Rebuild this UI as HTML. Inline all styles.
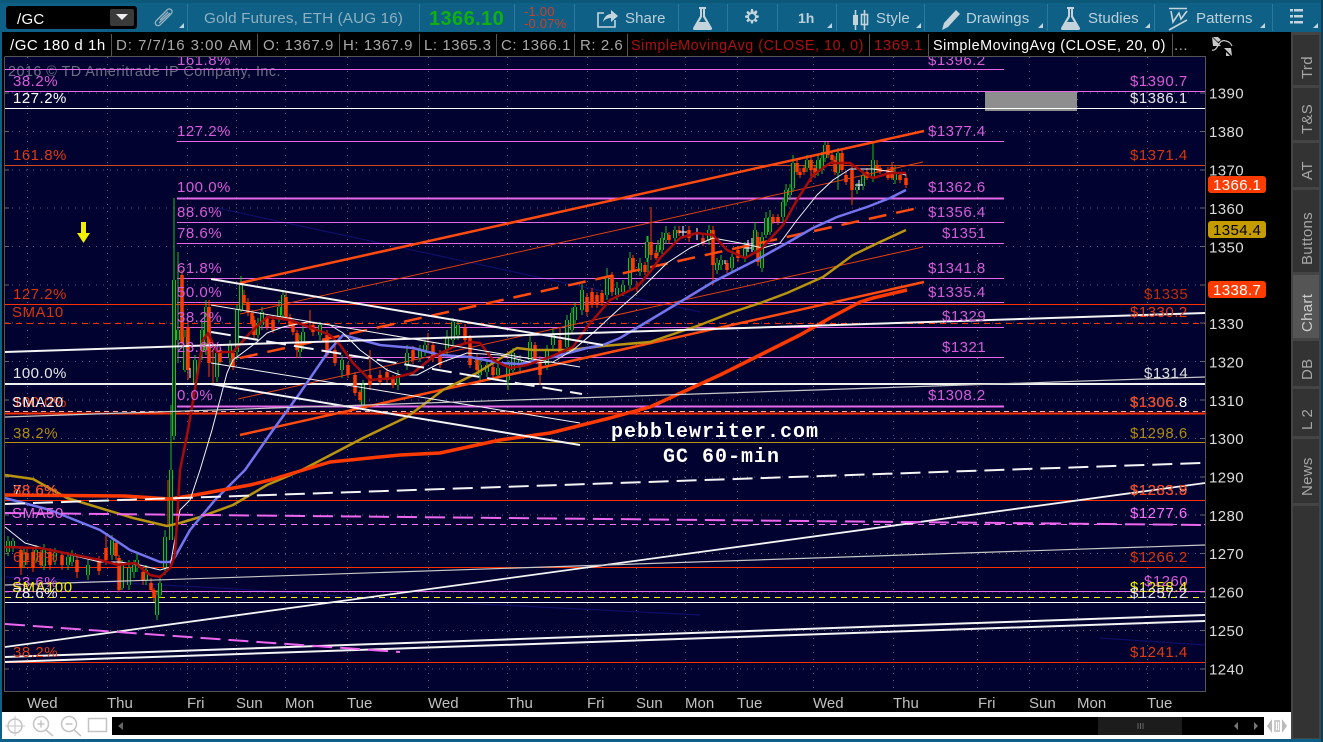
<!DOCTYPE html>
<html><head><meta charset="utf-8"><title>/GC chart</title>
<style>
html,body{margin:0;padding:0;background:#000;width:1323px;height:742px;overflow:hidden}
svg{display:block;position:absolute;left:0;top:0}
text{font-family:"Liberation Sans",sans-serif;font-size:15px;letter-spacing:.5px;white-space:pre}
.m text{fill:#d85cd8}
.t text{fill:#a8a8a8;letter-spacing:.55px}
.ax text{fill:#dcdcdc;letter-spacing:.4px}
.d text{fill:#c0c0c0;letter-spacing:0}
.tb text{fill:#bcd0da;letter-spacing:.1px}
.tab text{fill:#a6a6a6;letter-spacing:.3px}
.ic{fill:none;stroke:#c4d4dc;stroke-width:1.6}
</style></head><body>
<svg width="1323" height="742" viewBox="0 0 1323 742" xmlns="http://www.w3.org/2000/svg">
<rect width="1323" height="742" fill="#000"/>
<!-- chart bg -->
<rect x="4.5" y="56.5" width="1201" height="635" fill="#020230" stroke="#555" stroke-width="1"/>
<!-- grid -->
<g stroke="#5c5c7c" stroke-width="1" stroke-dasharray="1 6" fill="none">
<path d="M5 93H1205M5 131.5H1205M5 170H1205M5 208H1205M5 246.500H1205M5 285H1205M5 323H1205M5 361.500H1205M5 400H1205M5 438.500H1205M5 477H1205M5 515H1205M5 553.500H1205M5 592H1205M5 630.500H1205M5 669H1205"/>
<path d="M27.500 57V691M107.500 57V691M187.500 57V691M236.500 57V691M285.500 57V691M347.500 57V691M428.500 57V691M507.500 57V691M587.500 57V691M636.500 57V691M685.500 57V691M737.500 57V691M813.500 57V691M893.500 57V691M977.500 57V691M1029.500 57V691M1077.500 57V691M1147.500 57V691"/>
</g>
<path d="M5 93h4M5 131.500h4M5 170h4M5 208h4M5 246.500h4M5 285h4M5 323h4M5 361.500h4M5 400h4M5 438.500h4M5 477h4M5 515h4M5 553.500h4M5 592h4M5 630.500h4M5 669h4M1200 93h5M1200 131.500h5M1200 170h5M1200 208h5M1200 246.500h5M1200 285h5M1200 323h5M1200 361.500h5M1200 400h5M1200 438.500h5M1200 477h5M1200 515h5M1200 553.500h5M1200 592h5M1200 630.500h5M1200 669h5" stroke="#666" fill="none"/>
<!-- gray box -->
<rect x="985" y="91" width="92" height="20" fill="#8e8e8e"/>
<!-- watermark -->
<text x="8" y="76" fill="#6e6e82" textLength="273" lengthAdjust="spacingAndGlyphs">2016 © TD Ameritrade IP Company, Inc.</text>
<!-- faint navy lines -->
<path d="M217 208L700 312M5 577L220 588L400 600L700 615M1100 638L1205 645" stroke="#0e0e68" stroke-width="1.2" fill="none"/>
<!-- horizontal lines -->
<g fill="none" stroke-width="1">
<path d="M5 69.500H1004M5 91.500H1205M177 141.500H1004M177 222.500H1004M177 243.500H1004M177 278.500H1004M177 302.500H1004M177 327.500H1004M177 357.500H1004M5 591.500H1205" stroke="#e468e8"/>
<path d="M177 198.500H1004M177 406.500H1004" stroke="#e468e8" stroke-width="2"/>
<path d="M5 108.500H1205M5 602.500H1205" stroke="#fff"/>
<path d="M5 165.500H1205" stroke="#d04820"/>
<path d="M5 304.500H1205M5 500.500H1205M5 567.500H1205M5 662.500H1205" stroke="#ff3000"/>
<path d="M5 323.500H1205" stroke="#ff3000" stroke-dasharray="6 5"/>
<path d="M5 384H1205" stroke="#f0f0f0" stroke-width="2"/>
<path d="M5 413.500H1205" stroke="#ff3000" stroke-width="2"/>
<path d="M5 411.500H1205" stroke="#ffb0a0" stroke-dasharray="5 4"/>
<path d="M5 442.500H1205" stroke="#b89010"/>
<path d="M5 524.500H1205" stroke="#ff70ff" stroke-dasharray="6 5"/>
<path d="M5 597.500H1205" stroke="#f0f000" stroke-dasharray="6 5"/>
</g>
<!-- candles -->
<path fill="none" stroke="#18c018" stroke-width="1" d="M174 198V440M178 252V363M171 405V540M165 530V575M8 536V556M13 538V552M24 548V568M36 545V563M44 544V570M55 548V565M68 552V570M72 550V566M88 560V580M112 535V560M122 560V590M129 560V590M134 560V578M137 552V572M146 565V585M157 590V620M160 578V598M185 330V372M195 355V390M202 322V360M206 300V355M217 345V382M230 340V365M237 305V360M241 276V312M258 318V338M262 307V330M279 300V322M283 290V318M300 335V358M303 326V350M320 322V340M342 355V378M363 380V410M398 370V390M407 345V370M420 345V362M425 340V356M447 330V355M453 318V345M458 320V340M480 360V380M487 360V377M498 363V380M508 360V390M513 348V374M520 355V371M530 336V365M547 345V370M553 328V350M567 315V352M572 308V334M575 302V324M582 284V315M607 268V300M617 282V300M623 280V296M630 252V290M640 258V276M648 236V274M647 236V262M658 240V256M662 232V254M666 226V244M675 226V242M709 225V245M717 258V274M721 255V270M732 252V272M745 242V262M755 222V252M762 232V272M766 212V238M770 210V235M783 198V222M786 184V206M790 184V200M793 155V192M807 155V172M818 154V176M822 152V174M825 142V162M838 148V190M857 183V194M863 170V190M873 143V182M895 166V184"/>
<g fill="none" stroke="#18c018" stroke-width="4"><path id="gb" d="M174 280V436M178 330V340M171 470V540M165 537V567M8 541V552M13 541V548M24 553V565M36 550V560M44 548V566M55 553V560M68 557V565M72 555V562M88 565V575M112 540V555M122 565V588M129 568V585M134 565V572M137 560V568M146 570V580M157 595V615M160 583V595M185 337V370M195 360V383M202 330V352M206 307V350M217 353V377M230 345V358M237 310V352M241 285V310M258 323V335M262 312V325M279 307V317M283 295V315M300 340V352M303 332V345M320 325V335M342 360V370M363 385V405M398 375V385M407 353V365M420 350V358M425 345V352M447 338V350M453 322V340M458 325V335M480 365V375M487 365V372M498 368V375M508 365V380M513 353V370M520 360V367M530 342V360M547 350V365M553 335V345M567 320V347M572 313V330M575 307V320M582 290V310M607 277V295M617 288V295M623 285V292M630 258V285M640 263V272M647 242V258M658 245V252M662 238V250M666 233V240M675 230V238M709 230V240M717 263V270M721 260V265M732 257V268M745 247V258M755 230V250M762 237V268M766 218V235M770 217V232M783 202V217M786 190V202M790 188V195M793 163V188M807 160V168M818 160V172M822 158V170M825 145V158M838 153V173M857 187V190M863 175V186M873 160V178M895 172V180"/></g>
<use href="#gb" fill="none" stroke="#020230" stroke-width="1.6"/>
<path fill="none" stroke="#ff3a00" stroke-width="1" d="M21 546V575M27 548V565M33 548V572M41 550V568M50 548V570M62 552V570M77 556V578M99 556V575M106 535V565M116 540V560M119 555V592M143 568V585M151 578V592M154 588V602M168 480V527M182 270V345M188 320V380M209 300V377M213 350V383M220 345V365M233 350V370M244 290V305M248 298V316M252 310V326M254 316V338M267 314V330M273 316V333M286 292V320M290 314V328M293 320V335M297 330V358M310 310V330M313 322V336M327 330V358M335 346V366M348 362V378M355 372V396M360 390V402M370 350V390M380 370V385M387 368V383M393 375V388M413 346V364M428 333V350M433 342V362M440 350V368M465 324V344M470 335V368M477 354V372M493 363V378M535 342V362M540 356V385M560 327V358M587 293V316M592 288V308M597 292V308M602 290V306M612 272V296M633 255V272M637 282V292M645 262V275M651 207V260M656 250V260M669 232V244M679 226V236M689 226V242M703 234V246M713 226V285M727 260V273M738 246V262M758 232V266M773 214V224M778 214V225M797 158V175M800 168V178M804 165V175M811 156V182M815 165V178M828 142V158M832 152V163M835 156V175M842 150V172M846 172V185M852 166V205M867 168V180M877 160V172M880 165V174M888 167V180M892 162V180M900 172V183M906 174V188"/>
<path fill="none" stroke="#ff3a00" stroke-width="3.5" d="M21 550V568M27 553V560M33 552V568M41 553V565M50 552V565M62 555V565M77 560V572M99 560V571M106 548V560M116 543V556M119 558V590M143 572V580M151 583V590M154 590V598M182 275V343M188 327V370M209 307V363M220 350V362M233 353V367M244 295V303M248 302V313M252 313V323M254 320V335M267 317V327M273 320V330M286 297V317M290 317V325M293 323V332M297 333V350M313 325V332M327 335V355M335 350V363M348 365V375M355 375V393M360 392V400M370 375V385M380 375V382M387 372V380M393 378V385M413 350V360M433 345V358M440 353V365M465 328V340M470 338V365M477 358V370M493 367V375M535 345V360M540 360V375M560 340V355M587 297V312M592 292V305M597 295V305M602 293V303M612 275V292M633 258V270M645 265V272M651 242V255M656 253V258M669 235V240M679 230V233M689 230V238M703 238V243M713 230V265M727 263V270M738 250V258M758 237V262M773 217V222M778 217V222M797 163V172M800 172V175M804 168V172M811 160V170M815 168V175M828 145V155M832 155V160M835 160V172M842 153V170M846 175V182M852 170V190M867 172V178M877 165V170M880 168V172M888 170V178M892 167V178M900 175V180M906 178V185"/>
<path fill="none" stroke="#fff" stroke-width="1" d="M190 368V378M683 226V238M697 228V240M725 260V264M748 240V252M752 238V252M859 180V190M855 185h8M679 232h8M744 248h8"/>
<!-- trend lines under MAs -->
<g fill="none" stroke-linecap="butt">
<path d="M240 283L924 131" stroke="#ff4a10" stroke-width="2.500"/>
<path d="M240 314L923 162M238 399L923 247" stroke="#e04010" stroke-width="1"/>
<path d="M240 358L918 208" stroke="#ff4a10" stroke-width="2.500" stroke-dasharray="18 10"/>
<path d="M240 435L924 282" stroke="#ff4a10" stroke-width="2.500"/>
</g>
<!-- MAs -->
<g fill="none" stroke-linejoin="round">
<path stroke="#b89410" stroke-width="2.500" d="M5 475L33 479L67 498L100 508L133 518L167 526L180 523L200 517L233 505L267 485L300 471L363 438L407 417L443 390L477 373L517 348L533 350L570 350L603 346L650 342L700 325L733 312L763 302L787 293L823 277L853 255L880 242L906 230"/>
<path stroke="#7474ee" stroke-width="2.500" d="M5 498L50 510L100 530L130 550L160 562L170 562L175 557L190 530L215 500L245 470L273 430L300 393L328 352L343 335L380 345L413 348L440 355L470 357L500 363L520 364L553 357L587 348L603 345L620 338L650 320L680 302L713 282L760 258L787 243L813 228L837 217L867 207L890 198L906 190"/>
<path stroke="#ff3a00" stroke-width="3.500" d="M5 495L125 496L170 499L195 495L250 485L270 480L330 462L400 455L440 453L500 440L550 433L610 418L650 407L720 375L800 335L830 318L860 302L873 298L907 290"/>
<path stroke="#f4f4f4" stroke-width="1" d="M5 527L25 543L50 550L100 562L120 562L140 565L160 570L170 567L180 510L190 500L200 470L212 430L227 373L233 360L257 342L267 333L283 327L307 322L330 325L343 333L360 350L387 370L400 375L417 375L440 363L467 353L500 355L533 363L553 362L573 350L593 333L620 308L637 293L667 263L690 248L713 238L740 243L763 248L780 243L797 220L817 195L833 180L850 169L873 169L893 172L906 175"/>
<path stroke="#a80a0a" stroke-width="2.500" d="M5 547L40 548L60 552L100 560L118 565L135 563L150 575L160 577L170 568L175 555L180 470L188 430L197 377L203 340L208 333L217 352L233 352L250 333L267 317L290 320L317 330L330 335L340 345L353 363L370 380L393 378L413 373L433 357L453 347L470 342L480 343L493 360L510 368L527 365L550 357L573 347L587 327L610 300L637 287L650 272L660 258L680 238L697 233L713 235L727 250L745 258L760 250L783 225L797 200L813 175L830 163L850 163L867 175L873 178L890 173L906 173"/>
</g>
<!-- white trend lines -->
<g fill="none" stroke="#f4f4f4">
<path d="M211 279L603 345" stroke-width="2"/>
<path d="M211 305L580 367M211 363L580 423" stroke-width="1"/>
<path d="M211 332L582 394" stroke-width="2" stroke-dasharray="20 8"/>
<path d="M211 384L580 445" stroke-width="2"/>
<path d="M5 352L1205 313" stroke-width="2"/>
<path d="M5 417L1205 377" stroke-width="1.200" stroke="#c8c8c8"/>
<path d="M5 504L1202 463" stroke-width="2" stroke-dasharray="20 8"/>
<path d="M5 647L1205 483" stroke-width="1.800"/>
<path d="M5 585L1205 545" stroke-width="1.200" stroke="#c8c8c8"/>
<path d="M5 657L1205 615M5 662L1205 621" stroke-width="2"/>
<path d="M5 624L400 652" stroke="#ee66ee" stroke-width="2" stroke-dasharray="20 8"/>
<path d="M5 513L1205 525" stroke="#ee66ee" stroke-width="2" stroke-dasharray="20 8"/>
</g>
<!-- arrow -->
<path d="M81 222H86V233H90L83.500 243L77 233H81Z" fill="#f0f000"/>
<!-- labels -->
<g class="m">
<text x="177" y="65">161.8%</text><text x="177" y="136">127.2%</text><text x="177" y="192">100.0%</text><text x="177" y="217">88.6%</text><text x="177" y="238">78.6%</text><text x="177" y="273">61.8%</text><text x="177" y="297">50.0%</text><text x="177" y="322">38.2%</text><text x="177" y="352">23.6%</text><text x="177" y="400">0.0%</text>
<text x="928" y="65">$1396.2</text><text x="928" y="136">$1377.4</text><text x="928" y="192">$1362.6</text><text x="928" y="217">$1356.4</text><text x="942" y="238">$1351</text><text x="928" y="273">$1341.8</text><text x="928" y="297">$1335.4</text><text x="942" y="321">$1329</text><text x="942" y="352">$1321</text><text x="928" y="400">$1308.2</text>
<text x="13" y="86">38.2%</text><text x="13" y="587" >23.6%</text>
<text x="1130" y="86">$1390.7</text><text x="1144" y="586">$1260</text>
</g>
<g>
<text x="13" y="103" fill="#fff">127.2%</text><text x="1130" y="103" fill="#e8e8e8">$1386.1</text>
<text x="13" y="160" fill="#e03a10">161.8%</text><text x="1130" y="160" fill="#d83410">$1371.4</text>
<text x="13" y="299" fill="#d83410">127.2%</text><text x="1144" y="299" fill="#c02c08">$1335</text>
<text x="12" y="317" fill="#d83410">SMA10</text><text x="1130" y="317" fill="#e83810">$1330.2</text>
<text x="13" y="378" fill="#e8e8e8">100.0%</text><text x="1144" y="378" fill="#e0e0e0">$1314</text>
<text x="13" y="407" fill="#f03c10">100.0%</text><text x="12" y="407" fill="#f0f0f0">SMA20</text><text x="1130" y="407" fill="#fff">$1306.8</text><text x="1130" y="407" fill="#ff3a10">$1306.</text>
<text x="13" y="438" fill="#b08c10">38.2%</text><text x="1130" y="438" fill="#b08c10">$1298.6</text>
<text x="13" y="495" fill="#e8e8e8">78.6%</text><text x="13" y="495" fill="#ff3a10">88.6%</text><text x="1130" y="495" fill="#e8e8e8">$1283.9</text><text x="1130" y="495" fill="#ff3a10">$1283.8</text>
<text x="12" y="518" fill="#e868e8">SMA50</text><text x="1130" y="518" fill="#ff70ff">$1277.6</text>
<text x="13" y="562" fill="#e03a10">61.8%</text><text x="1130" y="562" fill="#d83410">$1266.2</text>
<text x="12" y="592" fill="#f0f000">SMA100</text><text x="1130" y="592" fill="#f0f000">$1258.4</text>
<text x="13" y="598" fill="#e8e8e8">78.6%</text><text x="1130" y="598" fill="#e8e8e8">$1257.2</text>
<text x="13" y="657" fill="#e03a10">38.2%</text><text x="1130" y="657" fill="#e03a10">$1241.4</text>
</g>
<g fill="#fff" style="font-weight:bold">
<text x="611" y="437" style='font-family:"Liberation Mono",monospace;font-size:20px;letter-spacing:1px' fill="#fff">pebblewriter.com</text>
<text x="663" y="462" style='font-family:"Liberation Mono",monospace;font-size:20px;letter-spacing:1px' fill="#fff">GC 60-min</text>
</g>
<!-- chrome: legend -->
<rect x="0" y="32" width="1292" height="24.500" fill="#000"/>
<path d="M5 56.500H1205" stroke="#555"/>
<path d="M111.500 34V56M257.500 34V56M339.500 34V56M419.500 34V56M496.500 34V56M574.500 34V56M627.500 34V56M869.500 34V56M928.500 34V56M1172.500 34V56" stroke="#555"/>
<g class="t">
<text x="10" y="50" style="fill:#fff">/GC 180 d 1h</text>
<text x="116" y="50" textLength="136" lengthAdjust="spacing">D: 7/7/16 3:00 AM</text><text x="263" y="50">O: 1367.9</text><text x="343" y="50">H: 1367.9</text><text x="424" y="50">L: 1365.3</text><text x="501" y="50">C: 1366.1</text><text x="580" y="50">R: 2.6</text>
<text x="631" y="50" style="fill:#b01010" textLength="233" lengthAdjust="spacingAndGlyphs">SimpleMovingAvg (CLOSE, 10, 0)</text><text x="874" y="50" style="fill:#b01010" textLength="49">1369.1</text>
<text x="933" y="50" style="fill:#fff" textLength="233" lengthAdjust="spacingAndGlyphs">SimpleMovingAvg (CLOSE, 20, 0)</text><text x="1174" y="50">...</text>
</g>
<!-- axis -->
<path d="M1205.500 56V691" stroke="#555"/>
<g class="ax">
<text x="1209" y="98.500">1390</text><text x="1209" y="137">1380</text><text x="1209" y="175.500">1370</text><text x="1209" y="214">1360</text><text x="1209" y="252.500">1350</text><text x="1209" y="291">1340</text><text x="1209" y="329">1330</text><text x="1209" y="367.500">1320</text><text x="1209" y="406">1310</text><text x="1209" y="444">1300</text><text x="1209" y="482.500">1290</text><text x="1209" y="521">1280</text><text x="1209" y="559">1270</text><text x="1209" y="597.500">1260</text><text x="1209" y="636">1250</text><text x="1209" y="674.500">1240</text>
</g>
<rect x="1208" y="176" width="58" height="17" rx="3" fill="#ff3c00"/><text x="1213" y="190" fill="#fff" style="letter-spacing:.4px">1366.1</text>
<rect x="1208" y="221" width="58" height="17" rx="3" fill="#c49c00"/><text x="1213" y="235" fill="#000" style="letter-spacing:.4px">1354.4</text>
<rect x="1208" y="281" width="58" height="17" rx="3" fill="#ff3c00"/><text x="1213" y="295" fill="#fff" style="letter-spacing:.4px">1338.7</text>
<!-- scale icon -->
<g fill="#c8c8c8"><path d="M1212 37L1221 46H1213Z M1213 37L1218 37L1221 40L1218 42Z"/><path d="M1232 56L1224 48H1231Z"/><path d="M1226 56h4l-4-4z"/></g>
<path d="M1212 50C1218 52 1218 38 1226 41C1230 42 1231 44 1232 46" fill="none" stroke="#c8c8c8" stroke-width="1.200"/>
<!-- time axis -->
<g class="d">
<text x="27" y="708">Wed</text><text x="107" y="708">Thu</text><text x="187" y="708">Fri</text><text x="236" y="708">Sun</text><text x="285" y="708">Mon</text><text x="347" y="708">Tue</text><text x="428" y="708">Wed</text><text x="507" y="708">Thu</text><text x="587" y="708">Fri</text><text x="636" y="708">Sun</text><text x="685" y="708">Mon</text><text x="737" y="708">Tue</text><text x="813" y="708">Wed</text><text x="893" y="708">Thu</text><text x="978" y="708">Fri</text><text x="1029" y="708">Sun</text><text x="1077" y="708">Mon</text><text x="1147" y="708">Tue</text>
</g>
<!-- left strip -->
<rect x="0" y="0" width="2" height="742" fill="#0e6086"/>
<!-- bottom bar -->
<rect x="2" y="712" width="1290" height="27" fill="#fff"/>
<rect x="0" y="739" width="1323" height="3" fill="#0e6086"/>
<g fill="none" stroke="#c4c4c4" stroke-width="1.500">
<circle cx="15" cy="726" r="7"/><path d="M15 716V736M5 726H25" stroke-width="1"/>
<circle cx="41" cy="724" r="7.500"/><path d="M46 730L53 736M37.500 724h7M41 720.500v7"/>
<circle cx="69" cy="724" r="7.500"/><path d="M74 730L81 736M65.500 724h7"/>
<rect x="88.500" y="718.500" width="18" height="13"/>
</g>
<rect x="112" y="717" width="1152" height="18" fill="#000"/>
<path d="M123 722V730L118 726Z" fill="#666"/>
<rect x="1098" y="717" width="84" height="18" fill="#1c1c1c"/>
<path d="M1138 723V729M1140.500 723V729M1143 723V729" stroke="#666"/>
<path d="M1238 722V730L1234 726ZM1254 722V730L1258 726Z" fill="#777"/>
<path d="M1272 719V733L1267 726ZM1282 719V733L1287 726Z" fill="#bbb"/><path d="M1274 720H1280V732H1274Z" fill="#ccc"/><path d="M1276.500 722V730M1278.500 722V730" stroke="#fff"/>
<!-- side tabs -->
<rect x="1291" y="32" width="30" height="710" fill="#444"/>
<rect x="1321" y="0" width="2" height="742" fill="#0b3f5a"/>
<g fill="#333" stroke="#444">
<rect x="1292.500" y="34.500" width="27" height="51"/><rect x="1292.500" y="87.500" width="27" height="53"/><rect x="1292.500" y="142.500" width="27" height="45"/><rect x="1292.500" y="189.500" width="27" height="83"/><rect x="1292.500" y="274.500" width="27" height="64" fill="#555"/><rect x="1292.500" y="340.500" width="27" height="46"/><rect x="1292.500" y="388.500" width="27" height="48"/><rect x="1292.500" y="438.500" width="27" height="65"/><rect x="1292.500" y="505.500" width="27" height="233"/>
</g>
<rect x="0" y="739" width="1321" height="3" fill="#0e6086"/>
<g class="tab">
<text transform="translate(1312 79) rotate(-90)">Trd</text>
<text transform="translate(1312 134) rotate(-90)">T&amp;S</text>
<text transform="translate(1312 180) rotate(-90)">AT</text>
<text transform="translate(1312 265) rotate(-90)">Buttons</text>
<text transform="translate(1312 332) rotate(-90)" style="fill:#ccc">Chart</text>
<text transform="translate(1312 380) rotate(-90)">DB</text>
<text transform="translate(1312 430) rotate(-90)">L 2</text>
<text transform="translate(1312 496) rotate(-90)">News</text>
</g>
<!-- toolbar -->
<rect x="0" y="0" width="1321" height="32" fill="#0e6086"/>
<rect x="0" y="0" width="1321" height="3" fill="#0c5878"/>
<path d="M187.500 4V31M419.500 4V31M514.500 4V31M574.500 4V31M678.500 4V31M727.500 4V31M777.500 4V31M836.500 4V31M924.500 4V31M1047.500 4V31M1154.500 4V31M1272.500 4V31" stroke="#2a7aa0"/>
<rect x="6" y="6" width="131" height="23" rx="3" fill="#000"/>
<text x="17" y="24" fill="#fff" style="letter-spacing:.3px">/GC</text>
<rect x="110" y="9" width="24" height="17" rx="2" fill="#3a3a3a"/><path d="M116 14H128L122 20Z" fill="#eee"/>
<path d="M156 21L167 10C170 7 174 11 171 14L160 25C157 27 154 24 156 21M160 20L168 12M159 23L170 13" fill="none" stroke="#9ab2c0" stroke-width="1.300"/>
<g class="tb">
<text x="204" y="23" style="fill:#8fb0c0" textLength="199" lengthAdjust="spacingAndGlyphs">Gold Futures, ETH (AUG 16)</text>
<text x="429" y="25" style="fill:#10b010;font-size:20px;letter-spacing:.4px;font-weight:bold">1366.10</text>
<text x="524" y="16" style="fill:#c8402a;font-size:13px;letter-spacing:.2px">-1.00</text>
<text x="524" y="28" style="fill:#c8402a;font-size:13px;letter-spacing:.2px">-0.07%</text>
<text x="625" y="23">Share</text>
<text x="798" y="23" style="font-weight:bold;letter-spacing:0;font-size:14px">1h</text>
<text x="876" y="23">Style</text>
<text x="966" y="23">Drawings</text>
<text x="1088" y="23">Studies</text>
<text x="1196" y="23">Patterns</text>
</g>
<!-- toolbar icons -->
<g class="ic">
<path d="M604 13H598V27H615V20"/>
</g>
<path d="M603 22C604 16 608 14 611 14V10L618 16L611 22V18C608 18 605 19 603 22Z" fill="#c4d4dc"/>
<g fill="#c4d4dc">
<path d="M699 7h7v2h-1v7l7 12c0 1 0 2-2 2h-15c-2 0-2-1-2-2l7-12V9h-1zM702 9v8l-3 5h7l-3-5V9z" fill-rule="evenodd"/>
<path d="M751 9h2l.6 3 2.500-1.800 1.500 1.500L755.800 15l3 .6v2l-3 .6 1.800 2.600-1.500 1.500-2.500-1.800-.6 3h-2l-.6-3-2.600 1.800-1.500-1.500 1.800-2.600-3-.6v-2l3-.6-1.800-2.600 1.500-1.500 2.600 1.800zM752 14a3 3 0 1 0 .01 0z" fill-rule="evenodd"/>
<path d="M1067 7h7v2h-1v7l7 12c0 1 0 2-2 2h-15c-2 0-2-1-2-2l7-12V9h-1zM1070 9v8l-3 5h7l-3-5V9z" fill-rule="evenodd"/>
<path d="M942 30L944 23L956 10L960 14L948 27Z"/>
<rect x="853" y="15" width="5" height="10"/>
<rect x="1290" y="9" width="3" height="2.500"/><rect x="1294" y="9" width="9" height="2.500"/><rect x="1290" y="15" width="3" height="2.500"/><rect x="1294" y="15" width="9" height="2.500"/><rect x="1290" y="21" width="3" height="2.500"/><rect x="1294" y="21" width="9" height="2.500"/>
</g>
<g class="ic" stroke-width="1.300">
<path d="M855.500 10V30M864.500 10V30"/><rect x="861.500" y="14.500" width="6" height="10"/>
<path d="M1169 8.500H1187M1171 11L1173 22L1179 13L1181 19L1187 11M1169 30L1187 20" />
</g>
<g fill="#c4d4dc">
<path d="M184 28h-5l5-5zM832 28h-5l5-5zM921 28h-5l5-5zM1043 28h-5l5-5zM1150 28h-5l5-5zM1265 28h-5l5-5zM1318 28h-5l5-5z"/>
</g>
</svg>
</body></html>
